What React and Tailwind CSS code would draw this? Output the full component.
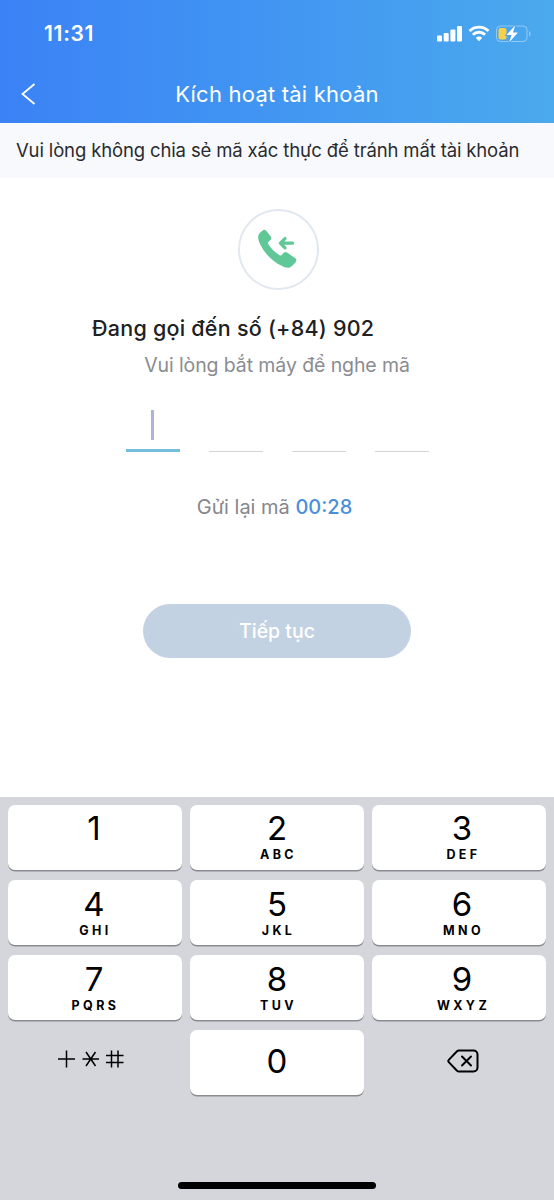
import React from "react";

const keys = [
  { digit: "1", letters: "", shift: "pr-[2px]" },
  { digit: "2", letters: "ABC", shift: "" },
  { digit: "3", letters: "DEF", shift: "pl-[6px]" },
  { digit: "4", letters: "GHI", shift: "pr-[2px] pt-[6px]" },
  { digit: "5", letters: "JKL", shift: "pt-[6px]" },
  { digit: "6", letters: "MNO", shift: "pl-[6px] pt-[6px]" },
  { digit: "7", letters: "PQRS", shift: "pr-[2px] pt-[6px]" },
  { digit: "8", letters: "TUV", shift: "pt-[6px]" },
  { digit: "9", letters: "WXYZ", shift: "pl-[6px] pt-[6px]" },
];

function StatusBar() {
  return (
    <div className="flex h-[67px] items-center justify-between pl-[44px] pr-[21px]">
      <span className="text-[21px] leading-none font-semibold tracking-[0.7px]">
        11:31
      </span>
      <svg width="96" height="20" viewBox="0 0 96 20" fill="none">
        {/* Signal */}
        <g fill="#fff">
          <rect x="0" y="11.5" width="5" height="6" rx="1" />
          <rect x="6.7" y="9" width="5" height="8.5" rx="1" />
          <rect x="13.4" y="5.5" width="5" height="12" rx="1" />
          <rect x="20" y="2" width="5" height="15.5" rx="1" />
        </g>
        {/* Wifi */}
        <g stroke="#fff" strokeWidth="2.9">
          <path d="M32.6 7a13.3 13.3 0 0 1 18.8 0" />
          <path d="M35.9 10.8a8.6 8.6 0 0 1 12.2 0" />
        </g>
        <path d="M42 17.3l-3.2-3.4a4.6 4.6 0 0 1 6.4 0z" fill="#fff" />
        {/* Battery */}
        <rect
          x="59.5"
          y="2"
          width="30.5"
          height="15.5"
          rx="4"
          stroke="#fff"
          strokeOpacity=".4"
        />
        <path d="M92 7v5.5c2-.8 2-4.7 0-5.5z" fill="#fff" fillOpacity=".4" />
        <rect x="61.5" y="4" width="8" height="11.5" rx="2" fill="#f9cf4a" />
        <path
          d="M78.3 1.3l-8.800 9.600h5l-2.300 7.400 8.800-9.700h-5z"
          fill="#fff"
          stroke="#47a0ee"
          strokeWidth="1.6"
          paintOrder="stroke"
        />
      </svg>
    </div>
  );
}

function Header() {
  return (
    <header className="h-[123px] bg-linear-to-r from-[#3b82f6] to-[#4ba9ed] text-white">
      <StatusBar />
      <div className="grid h-[54px] grid-cols-[60px_1fr_60px] items-center">
        <svg className="ml-[20px]" width="16" height="24" viewBox="0 0 16 24" fill="none">
          <path d="M14.5 2L2.5 12l12 10" stroke="#fff" strokeWidth="1.8" />
        </svg>
        <h1 className="text-center text-[22px] leading-none tracking-[0.22px] whitespace-nowrap">
          Kích hoạt tài khoản
        </h1>
      </div>
    </header>
  );
}

function CallIcon() {
  return (
    <div className="ml-[2px] flex size-[81px] items-center justify-center rounded-full border-2 border-[#e1e8ef] pb-[2px]">
      <svg width="42" height="42" viewBox="0 0 42 42" fill="none">
        <path
          d="M3.2 4.6L5.6 2.5c1.2-1 2.7-.8 3.6.3l4.6 5.7c.9 1.2.8 2.3-.2 3.3l-2.200 2.200c-.6.6-.6 1.200-.1 2 2.700 4.500 6.500 8.200 11.200 11.200.8.5 1.500.4 2.100-.2l2.200-2.200c1-.9 2.200-1 3.300-.2l8.200 5.700c1.300.9 1.400 2.400.4 3.600-1.600 2-3.500 4.200-5.600 5.300-2.100 1.100-5.300.3-8-1.100C14.500 33 6.300 24.200 2.400 14.500 1 10.500.3 7.400 3.200 4.600z"
          fill="#60c897"
        />
        <path
          d="M35.5 15.2H24M28 10.600l-4.600 4.600 4.600 4.600"
          stroke="#60c897"
          strokeWidth="3.3"
          strokeLinecap="round"
          strokeLinejoin="round"
        />
      </svg>
    </div>
  );
}

function CodeInput() {
  return (
    <div className="mt-[30px] flex h-[42px] gap-[29px]">
      <div className="flex w-[54px] justify-center border-b-3 border-[#73bfdc]">
        <span className="h-[30px] w-[3px] bg-[#adb5d9]"></span>
      </div>
      <div className="w-[54px] border-b border-[#d3d5d8]"></div>
      <div className="w-[54px] border-b border-[#d3d5d8]"></div>
      <div className="w-[54px] border-b border-[#d3d5d8]"></div>
    </div>
  );
}

function Key({ digit, letters, shift }) {
  return (
    <button className="h-[65px] rounded-[7px] bg-white shadow-[0_1.5px_0_#8a8b8f]">
      <span className={`flex h-full flex-col items-center pt-[5px] ${shift}`}>
        <span className="text-[33px] leading-[37px]">{digit}</span>
        <span className="mt-px pl-[3px] text-[12.5px] leading-[13px] font-bold tracking-[3.4px]">
          {letters}
        </span>
      </span>
    </button>
  );
}

function Keyboard() {
  return (
    <div className="flex h-[403px] flex-col items-center justify-between bg-[#d5d6dc] pt-2 pb-[11px] text-black">
      <div className="grid w-full grid-cols-3 gap-x-2 gap-y-[10px] px-2">
        {keys.map((key) => (
          <Key key={key.digit} {...key} />
        ))}
        <button className="flex h-[65px] items-center justify-center pb-[8px] pr-[9px]">
          <svg width="68" height="20" viewBox="0 0 68 20" stroke="#000" strokeWidth="1.5" fill="none">
            <path d="M1 10h17M9.500 1.500v17" />
            <path d="M25.500 10h16.500M29 3l9.500 14M38.500 3L29 17" />
            <path d="M49 6.500h17.500M49 13.500h17.500M54.500 1.500v17M61 1.500v17" />
          </svg>
        </button>
        <button className="flex h-[65px] items-center justify-center rounded-[7px] bg-white pb-[2px] text-[33px] leading-none shadow-[0_1.5px_0_#8a8b8f]">
          0
        </button>
        <button className="flex h-[65px] items-center justify-center pb-[3px] pl-[7px]">
          <svg width="32" height="24" viewBox="0 0 32 24" fill="none" stroke="#000" strokeWidth="2">
            <path d="M12 1.500h14.500a4 4 0 0 1 4 4v13a4 4 0 0 1-4 4H12a3 3 0 0 1-2-.8L2 13.400a2 2 0 0 1 0-2.800l8-8.300a3 3 0 0 1 2-.8z" />
            <path d="M15 7.500l9 9M24 7.500l-9 9" strokeLinecap="round" />
          </svg>
        </button>
      </div>
      <div className="h-[7px] w-[198px] rounded-full bg-black"></div>
    </div>
  );
}

export default function App() {
  return (
    <div className="flex h-[1200px] w-[554px] flex-col bg-white font-['Inter','Liberation_Sans',sans-serif]">
      <Header />
      <div className="flex h-[55px] items-center bg-[#f8f9fc] pl-4 text-[18.5px] leading-none tracking-[-0.14px] whitespace-nowrap text-[#2a2b2e]">
        Vui lòng không chia sẻ mã xác thực để tránh mất tài khoản
      </div>
      <main className="flex flex-1 flex-col items-center pt-[31px]">
        <CallIcon />
        <h2 className="mt-[23px] w-[370px] text-[21.5px] leading-[30px] font-medium tracking-[0.24px] whitespace-nowrap text-[#202123]">
          Đang gọi đến số (+84) 902
        </h2>
        <p className="mt-[8px] text-[19.5px] leading-[29px] tracking-[-0.1px] whitespace-nowrap text-[#8a8c92]">
          Vui lòng bắt máy để nghe mã
        </p>
        <CodeInput />
        <p className="mt-[41px] pr-[5px] text-[20px] leading-[28px] whitespace-nowrap text-[#85878d]">
          Gửi lại mã <span className="font-medium text-[#4a90dc]">00:28</span>
        </p>
        <button className="mt-[83px] h-[54px] w-[268px] rounded-full bg-[#c3d2e2] pt-px text-[19.5px] font-medium text-white">
          Tiếp tục
        </button>
      </main>
      <Keyboard />
    </div>
  );
}
